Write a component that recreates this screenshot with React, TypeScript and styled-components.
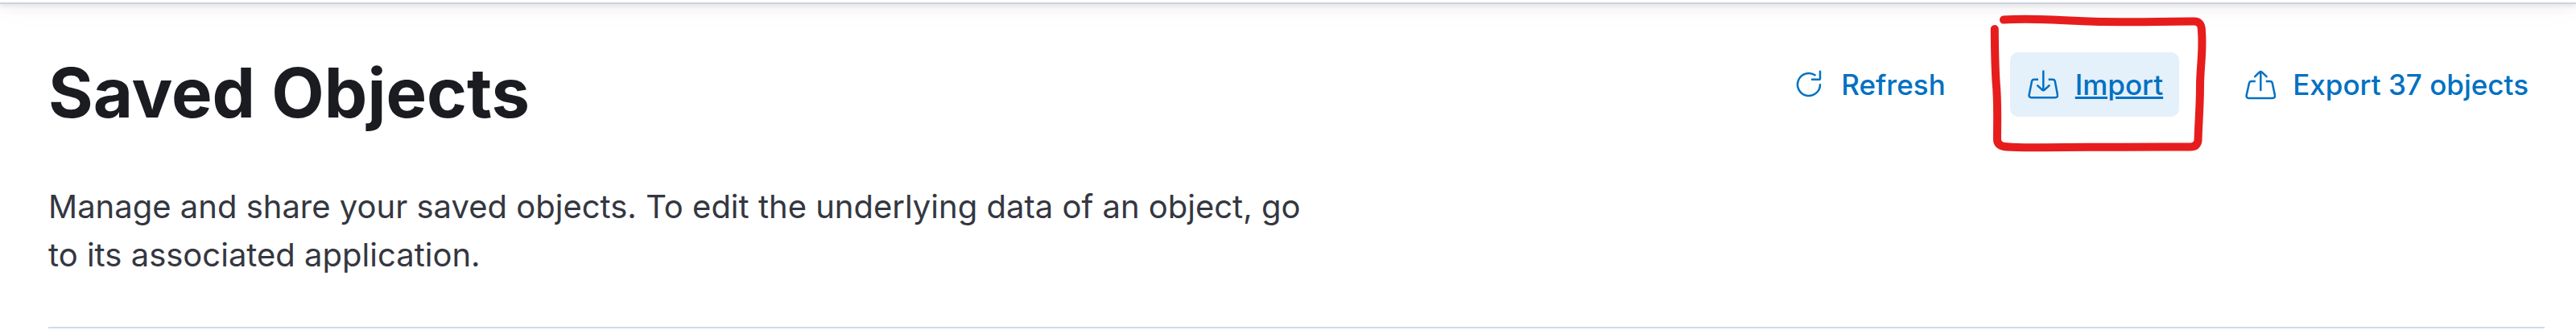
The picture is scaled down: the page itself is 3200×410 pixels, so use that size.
import React from "react";
import styled, { createGlobalStyle } from "styled-components";

const GlobalStyle = createGlobalStyle`
  *, *::before, *::after {
    box-sizing: border-box;
  }

  body {
    margin: 0;
    background: #fff;
    color: #343741;
    font-family: Inter, "Liberation Sans", sans-serif;
  }
`;

const HeaderBar = styled.header`
  height: 5px;
  background: #fff;
  border-bottom: 2px solid #cdd2e2;
  box-shadow:
    0 2px 5px rgba(0, 0, 0, 0.1),
    0 6px 12px rgba(0, 0, 0, 0.07),
    0 12px 26px rgba(0, 0, 0, 0.06);
`;

const Page = styled.main`
  padding: 60px 39px 0 60px;
`;

const PageHeader = styled.section`
  display: flex;
  align-items: flex-start;
  justify-content: space-between;
  gap: 60px;
  padding-bottom: 59px;
  border-bottom: 2px solid #d3dae6;
`;

const Intro = styled.div`
  display: flex;
  flex-direction: column;
  gap: 60px;
  max-width: 1600px;
`;

const Title = styled.h1`
  margin: 0;
  color: #1a1c21;
  font-size: 85px;
  font-weight: 700;
  line-height: 102px;
`;

const Description = styled.p`
  margin: 0;
  font-size: 40px;
  line-height: 60px;
`;

const Actions = styled.div`
  display: flex;
  flex-shrink: 0;
  gap: 60px;
`;

const ActionItem = styled.div`
  position: relative;
`;

const ActionButton = styled.button<{ $active?: boolean }>`
  display: flex;
  align-items: center;
  gap: 21px;
  height: 80px;
  padding: 0 20px;
  border: 0;
  border-radius: 10px;
  background: ${(p) => (p.$active ? "#e4f0fa" : "transparent")};
  color: #0071c2;
  font-family: inherit;
  font-size: 35px;
  font-weight: 500;
  line-height: 50px;
  white-space: nowrap;
  text-decoration: ${(p) => (p.$active ? "underline" : "none")};
  text-decoration-thickness: 3px;
  cursor: pointer;
`;

const Icon = styled.svg.attrs({ viewBox: "0 0 40 40", "aria-hidden": true })`
  width: 40px;
  height: 40px;
  fill: none;
  stroke: currentColor;
  stroke-width: 2.5;
  stroke-linecap: round;
  stroke-linejoin: round;
`;

const Marker = styled.svg.attrs({ viewBox: "0 0 280 180", "aria-hidden": true })`
  position: absolute;
  top: -50px;
  left: -30px;
  width: 280px;
  height: 180px;
  fill: none;
  stroke: #e71d1d;
  stroke-width: 10;
  stroke-linecap: round;
  stroke-linejoin: round;
  pointer-events: none;
`;

const RefreshIcon = () => (
  <Icon>
    <path d="M35 20.2A14 14 0 1 1 28.6 8.2" />
    <path d="M35 3.8V12.4Q35 13.7 33.7 13.7H25" />
  </Icon>
);

const ImportIcon = () => (
  <Icon>
    <path d="M21.3 3.500V26" />
    <path d="M14.2 21.3 19.8 26.5Q21.3 27.9 22.8 26.5L28.6 21.3" />
    <path
      strokeLinecap="butt"
      d="M15 13.7H10Q7.600 13.7 7 16L3.7 32.5Q3 36.3 6.6 36.3H36Q39.6 36.3 38.9 32.5L35.8 16Q35.2 13.7 32.8 13.7H27.7"
    />
  </Icon>
);

const ExportIcon = () => (
  <Icon>
    <path d="M21.3 5V27" />
    <path d="M14.2 10.2 19.8 4.700Q21.3 3.3 22.8 4.700L28.6 10.2" />
    <path
      strokeLinecap="butt"
      d="M14.8 16H10Q7.600 16 7 18.3L3.7 33.2Q3 37 6.6 37H36Q39.6 37 38.9 33.2L35.8 18.3Q35.2 16 32.8 16H27.7"
    />
  </Icon>
);

export default function App() {
  return (
    <>
      <GlobalStyle />
      <HeaderBar />
      <Page>
        <PageHeader>
          <Intro>
            <Title>Saved Objects</Title>
            <Description>
              Manage and share your saved objects. To edit the underlying data of an object, go to
              its associated application.
            </Description>
          </Intro>
          <Actions>
            <ActionItem>
              <ActionButton type="button">
                <RefreshIcon />
                <span>Refresh</span>
              </ActionButton>
            </ActionItem>
            <ActionItem>
              <ActionButton type="button" $active>
                <ImportIcon />
                <span>Import</span>
              </ActionButton>
              <Marker>
                <path d="M22 9.600C50 7.500 80 9 115 11S190 12.500 258 11.500C266 11.500 268 16 268 24C270 50 266 68 266 92C266 118 264 138 263.500 160Q262 167.500 254 167.500C190 167 130 168 55 168.300C40 168 30 168 22 167Q14 165 14 158C14 130 15 112 12.500 86C11 60 11 45 10.800 21" />
              </Marker>
            </ActionItem>
            <ActionItem>
              <ActionButton type="button">
                <ExportIcon />
                <span>Export 37 objects</span>
              </ActionButton>
            </ActionItem>
          </Actions>
        </PageHeader>
      </Page>
    </>
  );
}
